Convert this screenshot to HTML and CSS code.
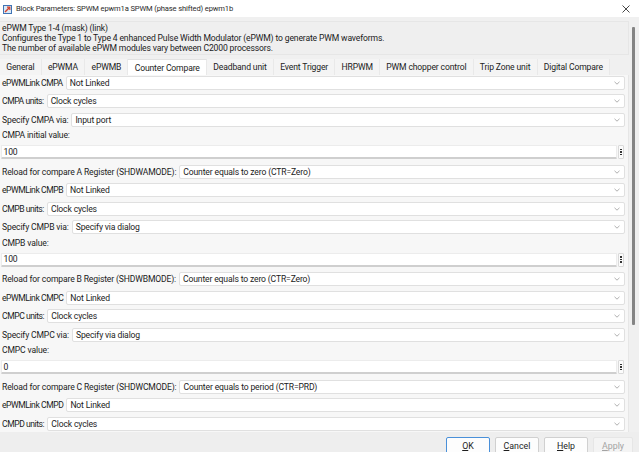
FILE: index.html
```html
<!DOCTYPE html>
<html>
<head>
<meta charset="utf-8">
<link rel="stylesheet" href="styles.css">
</head>
<body>
<div class="win">
  <div class="titlebar">
    <svg class="appicon" width="9" height="9" viewBox="0 0 9 9">
      <rect x="0.5" y="0.5" width="8" height="8" fill="#dbe8f5" stroke="#3f74b5"/>
      <path d="M2 7 L6.5 2.5" stroke="#d4402b" stroke-width="1.4"/>
      <path d="M4 2.2 H6.8 V5" fill="none" stroke="#d4402b" stroke-width="1.2"/>
    </svg>
    <span class="ttext">Block Parameters: SPWM epwm1a SPWM (phase shifted) epwm1b</span>
    <svg class="close" width="8" height="8" viewBox="0 0 8 8">
      <path d="M0.5 0.5 L7.5 7.5 M7.5 0.5 L0.5 7.5" stroke="#333" stroke-width="0.9"/>
    </svg>
  </div>
  <div class="body">
    <div class="scroll">
      <div class="group">
        <div class="mtitle">ePWM Type 1-4 (mask) (link)</div>
        <div class="desc">Configures the Type 1 to Type 4 enhanced Pulse Width Modulator (ePWM) to generate PWM waveforms.<br>The number of available ePWM modules vary between C2000 processors.</div>
      </div>
      <div class="tabs">
        <div class="tab">General</div>
        <div class="tab">ePWMA</div>
        <div class="tab">ePWMB</div>
        <div class="tab sel">Counter Compare</div>
        <div class="tab">Deadband unit</div>
        <div class="tab">Event Trigger</div>
        <div class="tab">HRPWM</div>
        <div class="tab">PWM chopper control</div>
        <div class="tab">Trip Zone unit</div>
        <div class="tab">Digital Compare</div>
      </div>
      <div class="panel">
        <div class="row"><span class="lbl caps">ePWMLink CMPA</span><div class="dd"><span>Not Linked</span><svg class="chev" width="6" height="4" viewBox="0 0 6 4"><path d="M0.5 0.8 L3 3.2 L5.5 0.8" fill="none" stroke="#9a9a9a" stroke-width="0.8"/></svg></div></div>
        <div class="row"><span class="lbl caps">CMPA units:</span><div class="dd"><span>Clock cycles</span><svg class="chev" width="6" height="4" viewBox="0 0 6 4"><path d="M0.5 0.8 L3 3.2 L5.5 0.8" fill="none" stroke="#9a9a9a" stroke-width="0.8"/></svg></div></div>
        <div class="row"><span class="lbl">Specify CMPA via:</span><div class="dd"><span>Input port</span><svg class="chev" width="6" height="4" viewBox="0 0 6 4"><path d="M0.5 0.8 L3 3.2 L5.5 0.8" fill="none" stroke="#9a9a9a" stroke-width="0.8"/></svg></div></div>
        <div class="plabel">CMPA initial value:</div>
        <div class="erow"><div class="edit">100</div><div class="ebtn"><i></i><i></i><i></i></div></div>
        <div class="row"><span class="lbl">Reload for compare A Register (SHDWAMODE):</span><div class="dd"><span>Counter equals to zero (CTR=Zero)</span><svg class="chev" width="6" height="4" viewBox="0 0 6 4"><path d="M0.5 0.8 L3 3.2 L5.5 0.8" fill="none" stroke="#9a9a9a" stroke-width="0.8"/></svg></div></div>
        <div class="row"><span class="lbl caps">ePWMLink CMPB</span><div class="dd"><span>Not Linked</span><svg class="chev" width="6" height="4" viewBox="0 0 6 4"><path d="M0.5 0.8 L3 3.2 L5.5 0.8" fill="none" stroke="#9a9a9a" stroke-width="0.8"/></svg></div></div>
        <div class="row"><span class="lbl caps">CMPB units:</span><div class="dd"><span>Clock cycles</span><svg class="chev" width="6" height="4" viewBox="0 0 6 4"><path d="M0.5 0.8 L3 3.2 L5.5 0.8" fill="none" stroke="#9a9a9a" stroke-width="0.8"/></svg></div></div>
        <div class="row"><span class="lbl">Specify CMPB via:</span><div class="dd"><span>Specify via dialog</span><svg class="chev" width="6" height="4" viewBox="0 0 6 4"><path d="M0.5 0.8 L3 3.2 L5.5 0.8" fill="none" stroke="#9a9a9a" stroke-width="0.8"/></svg></div></div>
        <div class="plabel">CMPB value:</div>
        <div class="erow"><div class="edit">100</div><div class="ebtn"><i></i><i></i><i></i></div></div>
        <div class="row"><span class="lbl">Reload for compare B Register (SHDWBMODE):</span><div class="dd"><span>Counter equals to zero (CTR=Zero)</span><svg class="chev" width="6" height="4" viewBox="0 0 6 4"><path d="M0.5 0.8 L3 3.2 L5.5 0.8" fill="none" stroke="#9a9a9a" stroke-width="0.8"/></svg></div></div>
        <div class="row"><span class="lbl caps">ePWMLink CMPC</span><div class="dd"><span>Not Linked</span><svg class="chev" width="6" height="4" viewBox="0 0 6 4"><path d="M0.5 0.8 L3 3.2 L5.5 0.8" fill="none" stroke="#9a9a9a" stroke-width="0.8"/></svg></div></div>
        <div class="row"><span class="lbl caps">CMPC units:</span><div class="dd"><span>Clock cycles</span><svg class="chev" width="6" height="4" viewBox="0 0 6 4"><path d="M0.5 0.8 L3 3.2 L5.5 0.8" fill="none" stroke="#9a9a9a" stroke-width="0.8"/></svg></div></div>
        <div class="row"><span class="lbl">Specify CMPC via:</span><div class="dd"><span>Specify via dialog</span><svg class="chev" width="6" height="4" viewBox="0 0 6 4"><path d="M0.5 0.8 L3 3.2 L5.5 0.8" fill="none" stroke="#9a9a9a" stroke-width="0.8"/></svg></div></div>
        <div class="plabel">CMPC value:</div>
        <div class="erow"><div class="edit">0</div><div class="ebtn"><i></i><i></i><i></i></div></div>
        <div class="row"><span class="lbl">Reload for compare C Register (SHDWCMODE):</span><div class="dd"><span>Counter equals to period (CTR=PRD)</span><svg class="chev" width="6" height="4" viewBox="0 0 6 4"><path d="M0.5 0.8 L3 3.2 L5.5 0.8" fill="none" stroke="#9a9a9a" stroke-width="0.8"/></svg></div></div>
        <div class="row"><span class="lbl caps">ePWMLink CMPD</span><div class="dd"><span>Not Linked</span><svg class="chev" width="6" height="4" viewBox="0 0 6 4"><path d="M0.5 0.8 L3 3.2 L5.5 0.8" fill="none" stroke="#9a9a9a" stroke-width="0.8"/></svg></div></div>
        <div class="row"><span class="lbl caps">CMPD units:</span><div class="dd"><span>Clock cycles</span><svg class="chev" width="6" height="4" viewBox="0 0 6 4"><path d="M0.5 0.8 L3 3.2 L5.5 0.8" fill="none" stroke="#9a9a9a" stroke-width="0.8"/></svg></div></div>
      </div>
    </div>
    <div class="vbar"><div class="thumb"></div></div>
  </div>
  <div class="buttons">
    <div class="btn focus"><u>O</u>K</div>
    <div class="btn"><u>C</u>ancel</div>
    <div class="btn"><u>H</u>elp</div>
    <div class="btn dis"><u>A</u>pply</div>
  </div>
</div>
</body>
</html>
```
FILE: styles.css
```css
html, body {
  margin: 0;
  padding: 0;
}
body {
  font-family: Roboto, Lato, sans-serif;
  font-size: 8.6px;
  letter-spacing: -0.15px;
  color: #1b1b1b;
  background: #f0f0f0;
}
.win {
  width: 639px;
  height: 452px;
  overflow: hidden;
  display: flex;
  flex-direction: column;
  background: #f0f0f0;
}
.titlebar {
  height: 17px;
  flex: none;
  background: #ffffff;
  display: flex;
  align-items: center;
  padding-left: 3px;
  box-sizing: border-box;
}
.appicon {
  flex: none;
  margin-top: 1px;
}
.ttext {
  margin-left: 4px;
  font-size: 7.6px;
  letter-spacing: -0.15px;
  color: #2b2b2b;
  flex: 1;
  white-space: nowrap;
}
.close {
  flex: none;
  margin-right: 9px;
  margin-top: 1px;
}
.body {
  height: 415px;
  flex: none;
  display: flex;
}
.scroll {
  width: 630px;
  flex: none;
  display: flex;
  flex-direction: column;
}
.group {
  margin-top: 4px;
  height: 34px;
  width: 629px;
  box-sizing: border-box;
  border: 1px solid #e6e6e6;
  border-left: none;
  background: #efefef;
  padding-left: 2px;
}
.mtitle {
  line-height: 9px;
  margin-top: 1.5px;
  white-space: nowrap;
}
.desc {
  line-height: 10px;
  margin-top: 0;
  white-space: nowrap;
}
.tabs {
  margin-top: 3.5px;
  height: 16.5px;
  display: flex;
  align-items: stretch;
}
.tab {
  padding: 0 6.25px;
  display: flex;
  align-items: center;
  padding-top: 1px;
  box-sizing: border-box;
  background: #f4f4f4;
  border-right: 1px solid #e9e9e9;
  white-space: nowrap;
  color: #222;
}
.tab.sel {
  background: #ffffff;
  border-top: 1px solid #e2e2e2;
}
.panel {
  height: 357px;
  box-sizing: border-box;
  background: #f7f7f7;
  border-right: 1px solid #e6e6e6;
  width: 629px;
  padding: 0.7px 3px 0 1px;
  display: flex;
  flex-direction: column;
  gap: 4.5px;
}
.row {
  display: flex;
  align-items: center;
  gap: 3px;
  height: 14px;
  flex: none;
}
.lbl {
  white-space: nowrap;
  flex: none;
  padding-left: 1px;
}
.lbl.caps {
  letter-spacing: -0.45px;
}
.dd {
  flex: 1;
  height: 14px;
  box-sizing: border-box;
  background: #ffffff;
  border: 1px solid #e0e0e0;
  border-radius: 2px;
  display: flex;
  align-items: center;
  justify-content: space-between;
  padding: 0 4px 0 3px;
  white-space: nowrap;
}
.chev {
  flex: none;
}
.plabel {
  height: 9.5px;
  line-height: 9.5px;
  flex: none;
  padding-left: 1px;
  white-space: nowrap;
}
.erow {
  display: flex;
  height: 14px;
  flex: none;
  margin-bottom: 1px;
  gap: 1px;
  padding-right: 1px;
}
.edit {
  flex: 1;
  box-sizing: border-box;
  background: #ffffff;
  border: 1px solid #ececec;
  border-bottom: 2px solid #cfcfcf;
  border-radius: 1px;
  padding-left: 1.5px;
  display: flex;
  align-items: center;
}
.ebtn {
  width: 6px;
  flex: none;
  box-sizing: border-box;
  border: 1px solid #dadada;
  border-radius: 1px;
  background: #fbfbfb;
  display: flex;
  flex-direction: column;
  align-items: center;
  justify-content: center;
  gap: 1px;
}
.ebtn i {
  display: block;
  width: 1.5px;
  height: 1.5px;
  background: #333;
}
.vbar {
  flex: 1;
  display: flex;
  justify-content: flex-start;
}
.thumb {
  margin-top: 10px;
  margin-left: 2px;
  width: 2.5px;
  height: 298px;
  background: #858585;
  border-radius: 1px;
}
.buttons {
  flex: 1;
  display: flex;
  justify-content: flex-end;
  align-items: flex-start;
  padding-top: 5px;
  padding-right: 6px;
  gap: 5px;
  background: #eeeeee;
}
.btn {
  width: 44px;
  height: 17px;
  box-sizing: border-box;
  background: #fdfdfd;
  border: 1px solid #d0d0d0;
  border-radius: 2px;
  display: flex;
  justify-content: center;
  align-items: center;
  font-size: 8.8px;
  letter-spacing: 0;
  color: #1e1e1e;
}
.btn.focus {
  border: 1px solid #4a90d9;
}
.btn.dis {
  width: 40px;
  color: #a3a3a3;
  background: #f4f4f4;
  border-color: #e6e6e6;
}
```
